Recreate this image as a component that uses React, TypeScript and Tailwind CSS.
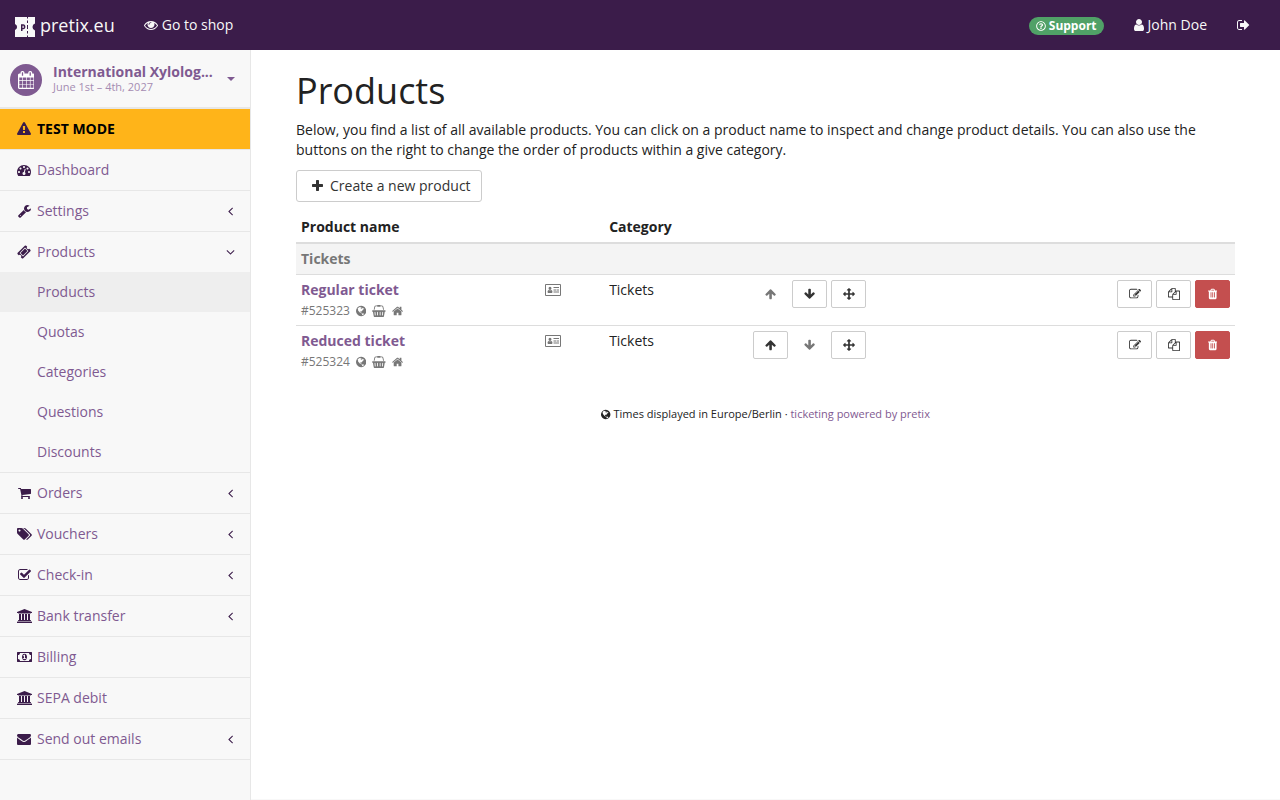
import React, { type ReactNode } from "react";
import { FaRegQuestionCircle } from "react-icons/fa";

type IconDef = { x?: number; w: number; d: string };

const icons = {
  eye: { w: 1792, d: "M1664 960q-152-236-381-353 61 104 61 225 0 185-131.5 316.5t-316.5 131.5-316.5-131.5-131.5-316.5q0-121 61-225-229 117-381 353 133 205 333.5 326.5t434.5 121.5 434.5-121.5 333.5-326.5zm-720-384q0-20-14-34t-34-14q-125 0-214.5 89.5t-89.5 214.5q0 20 14 34t34 14 34-14 14-34q0-86 61-147t147-61q20 0 34-14t14-34zm848 384q0 34-20 69-140 230-376.5 368.5t-499.5 138.5-499.5-139-376.5-368q-20-35-20-69t20-69q140-229 376.5-368t499.5-139 499.5 139 376.5 368q20 35 20 69z" },
  calendar: { x: 64, w: 1664, d: "M192 1664h288v-288h-288v288zm352 0h320v-288h-320v288zm-352-352h288v-320h-288v320zm352 0h320v-320h-320v320zm-352-384h288v-288h-288v288zm736 736h320v-288h-320v288zm-384-736h320v-288h-320v288zm768 736h288v-288h-288v288zm-384-352h320v-320h-320v320zm-352-864v-288q0-13-9.5-22.5t-22.5-9.5h-64q-13 0-22.5 9.5t-9.5 22.5v288q0 13 9.5 22.5t22.5 9.5h64q13 0 22.5-9.5t9.5-22.5zm736 864h288v-320h-288v320zm-384-384h320v-288h-320v288zm384 0h288v-288h-288v288zm32-480v-288q0-13-9.5-22.5t-22.5-9.5h-64q-13 0-22.5 9.5t-9.5 22.5v288q0 13 9.5 22.5t22.5 9.5h64q13 0 22.5-9.5t9.5-22.5zm384-64v1280q0 52-38 90t-90 38h-1408q-52 0-90-38t-38-90v-1280q0-52 38-90t90-38h128v-96q0-66 47-113t113-47h64q66 0 113 47t47 113v96h384v-96q0-66 47-113t113-47h64q66 0 113 47t47 113v96h128q52 0 90 38t38 90z" },
  warning: { w: 1792, d: "M1024 1375v-190q0-14-9.5-23.5t-22.5-9.5h-192q-13 0-22.5 9.5t-9.5 23.5v190q0 14 9.5 23.5t22.5 9.5h192q13 0 22.5-9.5t9.5-23.5zm-2-374l18-459q0-12-10-19-13-11-24-11h-220q-11 0-24 11-10 7-10 21l17 457q0 10 10 16.5t24 6.5h185q14 0 23.5-6.5t10.5-16.5zm-14-934l768 1408q35 63-2 126-17 29-46.5 46t-63.5 17h-1536q-34 0-63.5-17t-46.5-46q-37-63-2-126l768-1408q17-31 47-49t65-18 65 18 47 49z" },
  gauge: { w: 1792, d: "M384 1152q0-53-37.5-90.5t-90.5-37.5-90.5 37.5-37.5 90.5 37.5 90.5 90.5 37.5 90.5-37.5 37.5-90.5zm192-448q0-53-37.5-90.5t-90.5-37.5-90.5 37.5-37.5 90.5 37.5 90.5 90.5 37.5 90.5-37.5 37.5-90.5zm428 481l101-382q6-26-7.5-48.5t-38.5-29.5-48 6.5-30 39.5l-101 382q-60 5-107 43.5t-63 98.5q-20 77 20 146t117 89 146-20 89-117q16-60-6-117t-72-91zm660-33q0-53-37.5-90.5t-90.5-37.5-90.5 37.5-37.5 90.5 37.5 90.5 90.5 37.5 90.5-37.5 37.5-90.5zm-640-640q0-53-37.5-90.5t-90.5-37.5-90.5 37.5-37.5 90.5 37.5 90.5 90.5 37.5 90.5-37.5 37.5-90.5zm448 192q0-53-37.5-90.5t-90.5-37.5-90.5 37.5-37.5 90.5 37.5 90.5 90.5 37.5 90.5-37.5 37.5-90.5zm320 448q0 261-141 483-19 29-54 29h-1402q-35 0-54-29-141-221-141-483 0-182 71-348t191-286 286-191 348-71 348 71 286 191 191 286 71 348z" },
  wrench: { x: 64, w: 1664, d: "M448 1472q0-26-19-45t-45-19-45 19-19 45 19 45 45 19 45-19 19-45zm644-420l-682 682q-37 37-90 37-52 0-91-37l-106-108q-38-36-38-90 0-53 38-91l681-681q39 98 114.5 173.5t173.5 114.5zm634-435q0 39-23 106-47 134-164.5 217.5t-258.5 83.5q-185 0-316.5-131.5t-131.5-316.5 131.5-316.5 316.5-131.5q58 0 121.5 16.5t107.5 46.5q16 11 16 28t-16 28l-293 169v224l193 107q5-3 79-48.5t135.5-81 70.5-35.5q15 0 23.5 10t8.5 25z" },
  ticket: { w: 1792, d: "M1024 452l316 316-572 572-316-316zm-211 979l618-618q19-19 19-45t-19-45l-362-362q-18-18-45-18t-45 18l-618 618q-19 19-19 45t19 45l362 362q18 18 45 18t45-18zm889-637l-907 908q-37 37-90.5 37t-90.5-37l-126-126q56-56 56-136t-56-136-136-56-136 56l-125-126q-37-37-37-90.5t37-90.5l907-906q37-37 90.5-37t90.5 37l125 125q-56 56-56 136t56 136 136 56 136-56l126 125q37 37 37 90.5t-37 90.5z" },
  cart: { x: 64, w: 1664, d: "M704 1536q0 52-38 90t-90 38-90-38-38-90 38-90 90-38 90 38 38 90zm896 0q0 52-38 90t-90 38-90-38-38-90 38-90 90-38 90 38 38 90zm128-1088v512q0 24-16.5 42.5t-40.5 21.5l-1044 122q13 60 13 70 0 16-24 64h920q26 0 45 19t19 45-19 45-45 19h-1024q-26 0-45-19t-19-45q0-11 8-31.5t16-36 21.5-40 15.5-29.5l-177-823h-204q-26 0-45-19t-19-45 19-45 45-19h256q16 0 28.5 6.5t19.5 15.5 13 24.5 8 26 5.5 29.5 4.5 26h1201q26 0 45 19t19 45z" },
  tags: { w: 1920, d: "M448 448q0-53-37.5-90.5t-90.5-37.5-90.5 37.5-37.5 90.5 37.5 90.5 90.5 37.5 90.5-37.5 37.5-90.5zm1067 576q0 53-37 90l-491 492q-39 37-91 37-53 0-90-37l-715-716q-38-37-64.5-101t-26.5-117v-416q0-52 38-90t90-38h416q53 0 117 26.5t102 64.5l715 714q37 39 37 91zm384 0q0 53-37 90l-491 492q-39 37-91 37-36 0-59-14t-53-45l470-470q37-37 37-90 0-52-37-91l-715-714q-38-38-102-64.5t-117-26.5h224q53 0 117 26.5t102 64.5l715 714q37 39 37 91z" },
  check: { x: 64, w: 1664, d: "M1472 930v318q0 119-84.5 203.5t-203.5 84.5h-832q-119 0-203.5-84.5t-84.5-203.5v-832q0-119 84.5-203.5t203.5-84.5h832q63 0 117 25 15 7 18 23 3 17-9 29l-49 49q-10 10-23 10-3 0-9-2-23-6-45-6h-832q-66 0-113 47t-47 113v832q0 66 47 113t113 47h832q66 0 113-47t47-113v-254q0-13 9-22l64-64q10-10 23-10 6 0 12 3 20 8 20 29zm231-489l-814 814q-24 24-57 24t-57-24l-430-430q-24-24-24-57t24-57l110-110q24-24 57-24t57 24l263 263 647-647q24-24 57-24t57 24l110 110q24 24 24 57t-24 57z" },
  bank: { w: 1920, d: "M960 0l960 384v128h-128q0 26-20.5 45t-48.5 19h-1526q-28 0-48.5-19t-20.5-45h-128v-128zm-704 640h256v768h128v-768h256v768h128v-768h256v768h128v-768h256v768h59q28 0 48.5 19t20.5 45v64h-1664v-64q0-26 20.5-45t48.5-19h59v-768zm1595 960q28 0 48.5 19t20.5 45v128h-1920v-128q0-26 20.5-45t48.5-19h1782z" },
  money: { w: 1920, d: "M768 1152h384v-96h-128v-448h-114l-148 137 77 80q42-37 55-57h2v288h-128v96zm512-256q0 70-21 142t-59.5 134-101.5 101-138 39-138-39-101.5-101-59.5-134-21-142 21-142 59.5-134 101.5-101 138-39 138 39 101.5 101 59.5 134 21 142zm512 256v-512q-106 0-181-75t-75-181h-1152q0 106-75 181t-181 75v512q106 0 181 75t75 181h1152q0-106 75-181t181-75zm128-832v1152q0 26-19 45t-45 19h-1792q-26 0-45-19t-19-45v-1152q0-26 19-45t45-19h1792q26 0 45 19t19 45z" },
  envelope: { w: 1792, d: "M1792 710v794q0 66-47 113t-113 47h-1472q-66 0-113-47t-47-113v-794q44 49 101 87 362 246 497 345 57 42 92.5 65.5t94.5 48 110 24.5h2q51 0 110-24.5t94.5-48 92.5-65.5q170-123 498-345 57-39 100-87zm0-294q0 79-49 151t-122 123q-376 261-468 325-10 7-42.5 31t-54 38.5-52 32.5-57.5 27-50 9h-2q-23 0-50-9t-57.5-27-52-32.5-54-38.5-42.5-31q-91-64-262-182.5t-205-142.5q-62-42-117-115.5t-55-136.5q0-78 41.5-130t118.5-52h1472q65 0 112.5 47t47.5 113z" },
  angleLeft: { x: 576, w: 640, d: "M1203 544q0 13-10 23l-393 393 393 393q10 10 10 23t-10 23l-50 50q-10 10-23 10t-23-10l-466-466q-10-10-10-23t10-23l466-466q10-10 23-10t23 10l50 50q10 10 10 23z" },
  angleDown: { x: 320, w: 1152, d: "M1395 736q0 13-10 23l-466 466q-10 10-23 10t-23-10l-466-466q-10-10-10-23t10-23l50-50q10-10 23-10t23 10l393 393 393-393q10-10 23-10t23 10l50 50q10 10 10 23z" },
  plus: { x: 192, w: 1408, d: "M1600 736v192q0 40-28 68t-68 28h-416v416q0 40-28 68t-68 28h-192q-40 0-68-28t-28-68v-416h-416q-40 0-68-28t-28-68v-192q0-40 28-68t68-28h416v-416q0-40 28-68t68-28h192q40 0 68 28t28 68v416h416q40 0 68 28t28 68z" },
  arrowUp: { x: 64, w: 1664, d: "M1675 971q0 51-37 90l-75 75q-38 38-91 38-54 0-90-38l-294-293v704q0 52-37.5 84.5t-90.5 32.5h-128q-53 0-90.5-32.5t-37.5-84.5v-704l-294 293q-36 38-90 38t-90-38l-75-75q-38-38-38-90 0-53 38-91l651-651q35-37 90-37 54 0 91 37l651 651q37 39 37 91z" },
  arrowDown: { x: 64, w: 1664, d: "M1675 832q0 53-37 90l-651 652q-39 37-91 37-53 0-90-37l-651-652q-38-36-38-90 0-53 38-91l74-75q39-37 91-37 53 0 90 37l294 294v-704q0-52 38-90t90-38h128q52 0 90 38t38 90v704l294-294q37-37 90-37 52 0 91 37l75 75q37 39 37 91z" },
  arrows: { w: 1792, d: "M1792 896q0 26-19 45l-256 256q-19 19-45 19t-45-19-19-45v-128h-384v384h128q26 0 45 19t19 45-19 45l-256 256q-19 19-45 19t-45-19l-256-256q-19-19-19-45t19-45 45-19h128v-384h-384v128q0 26-19 45t-45 19-45-19l-256-256q-19-19-19-45t19-45l256-256q19-19 45-19t45 19 19 45v128h384v-384h-128q-26 0-45-19t-19-45 19-45l256-256q19-19 45-19t45 19l256 256q19 19 19 45t-19 45-45 19h-128v384h384v-128q0-26 19-45t45-19 45 19l256 256q19 19 19 45z" },
  edit: { w: 1792, d: "M888 1184l116-116-152-152-116 116v56h96v96h56zm440-720q-16-16-33 1l-350 350q-17 17-1 33t33-1l350-350q17-17 1-33zm80 594v190q0 119-84.5 203.5t-203.5 84.5h-832q-119 0-203.5-84.5t-84.5-203.5v-832q0-119 84.5-203.5t203.5-84.5h832q63 0 117 25 15 7 18 23 3 17-9 29l-49 49q-14 14-32 8-23-6-45-6h-832q-66 0-113 47t-47 113v832q0 66 47 113t113 47h832q66 0 113-47t47-113v-126q0-13 9-22l64-64q15-15 35-7t20 29zm-96-738l288 288-672 672h-288v-288zm444 132l-92 92-288-288 92-92q28-28 68-28t68 28l152 152q28 28 28 68t-28 68z" },
  copy: { w: 1792, d: "M1696 384q40 0 68 28t28 68v1216q0 40-28 68t-68 28h-960q-40 0-68-28t-28-68v-288h-544q-40 0-68-28t-28-68v-672q0-40 20-88t48-76l408-408q28-28 76-48t88-20h416q40 0 68 28t28 68v328q68-40 128-40h416zm-544 213l-299 299h299v-299zm-640-384l-299 299h299v-299zm196 647l316-316v-416h-384v416q0 40-28 68t-68 28h-416v640h512v-256q0-40 20-88t48-76zm956 804v-1152h-384v416q0 40-28 68t-68 28h-416v640h896z" },
  trash: { x: 192, w: 1408, d: "M704 1376v-704q0-14-9-23t-23-9h-64q-14 0-23 9t-9 23v704q0 14 9 23t23 9h64q14 0 23-9t9-23zm256 0v-704q0-14-9-23t-23-9h-64q-14 0-23 9t-9 23v704q0 14 9 23t23 9h64q14 0 23-9t9-23zm256 0v-704q0-14-9-23t-23-9h-64q-14 0-23 9t-9 23v704q0 14 9 23t23 9h64q14 0 23-9t9-23zm-544-992h448l-48-117q-7-9-17-11h-317q-10 2-17 11zm928 32v64q0 14-9 23t-23 9h-96v948q0 83-47 143.5t-113 60.5h-832q-66 0-113-58.5t-47-141.5v-952h-96q-14 0-23-9t-9-23v-64q0-14 9-23t23-9h309l70-167q15-37 54-63t79-26h320q40 0 79 26t54 63l70 167h309q14 0 23 9t9 23z" },
  user: { x: 256, w: 1280, d: "M1536 1399q0 109-62.5 187t-150.5 78h-854q-88 0-150.5-78t-62.5-187q0-85 8.5-160.5t31.5-152 58.5-131 94-89 134.5-34.5q131 128 313 128t313-128q76 0 134.5 34.5t94 89 58.5 131 31.5 152 8.5 160.5zm-256-887q0 159-112.5 271.5t-271.5 112.5-271.5-112.5-112.5-271.5 112.5-271.5 271.5-112.5 271.5 112.5 112.5 271.5z" },
  signOut: { x: 64, w: 1664, d: "M704 1440q0 4 1 20t.5 26.5-3 23.5-10 19.5-20.5 6.5h-320q-119 0-203.5-84.5t-84.5-203.5v-704q0-119 84.5-203.5t203.5-84.5h320q13 0 22.5 9.5t9.5 22.5q0 4 1 20t.5 26.5-3 23.5-10 19.5-20.5 6.5h-320q-66 0-113 47t-47 113v704q0 66 47 113t113 47h312l11.5 1 11.5 3 8 5.5 7 9 2 13.5zm928-544q0 26-19 45l-544 544q-19 19-45 19t-45-19-19-45v-288h-448q-26 0-45-19t-19-45v-384q0-26 19-45t45-19h448v-288q0-26 19-45t45-19 45 19l544 544q19 19 19 45z" },
  basket: { w: 2048, d: "M1920 768q53 0 90.5 37.5t37.5 90.5-37.5 90.5-90.5 37.5h-15l-115 662q-8 46-44 76t-82 30h-1280q-46 0-82-30t-44-76l-115-662h-15q-53 0-90.5-37.5t-37.5-90.5 37.5-90.5 90.5-37.5h1792zm-1435 800q26-2 43.5-22.5t15.5-46.5l-32-416q-2-26-22.5-43.5t-46.5-15.5-43.5 22.5-15.5 46.5l32 416q2 25 20.5 42t43.5 17h5zm411-64v-416q0-26-19-45t-45-19-45 19-19 45v416q0 26 19 45t45 19 45-19 19-45zm384 0v-416q0-26-19-45t-45-19-45 19-19 45v416q0 26 19 45t45 19 45-19 19-45zm352 5l32-416q2-26-15.5-46.5t-43.5-22.5-46.5 15.5-22.5 43.5l-32 416q-2 26 15.5 46.5t43.5 22.5h5q25 0 43.5-17t20.5-42zm-1156-1217l-93 412h-132l101-441q19-88 89-143.5t160-55.5h167q0-26 19-45t45-19h384q26 0 45 19t19 45h167q90 0 160 55.5t89 143.5l101 441h-132l-93-412q-11-44-45.5-72t-79.5-28h-167q0 26-19 45t-45 19h-384q-26 0-45-19t-19-45h-167q-45 0-79.5 28t-45.5 72z" },
  home: { x: 64, w: 1664, d: "M1472 992v480q0 26-19 45t-45 19h-384v-384h-256v384h-384q-26 0-45-19t-19-45v-480q0-1 .5-3t.5-3l575-474 575 474q1 2 1 6zm223-69l-62 74q-8 9-21 11h-3q-13 0-21-7l-692-577-692 577q-12 8-24 7-13-2-21-11l-62-74q-8-10-7-23.5t11-21.5l719-599q32-26 76-26t76 26l244 204v-195q0-14 9-23t23-9h192q14 0 23 9t9 23v408l219 182q10 8 11 21.5t-7 23.5z" },
  globe: { x: 128, w: 1536, d: "M896 128q209 0 385.5 103t279.5 279.5 103 385.5-103 385.5-279.5 279.5-385.5 103-385.5-103-279.5-279.5-103-385.5 103-385.5 279.5-279.5 385.5-103zm274 521q-2 1-9.5 9.5t-13.5 9.5q2 0 4.5-5t5-11 3.5-7q6-7 22-15 14-6 52-12 34-8 51 11-2-2 9.5-13t14.5-12q3-2 15-4.5t15-7.5l2-22q-12 1-17.5-7t-6.5-21q0 2-6 8 0-7-4.5-8t-11.5 1-9 1q-10-3-15-7.5t-8-16.5-4-15q-2-5-9.5-11t-9.5-10q-1-2-2.5-5.5t-3-6.5-4-5.5-5.5-2.5-7 5-7.5 10-4.5 5q-3-2-6-1.5t-4.5 1-4.5 3-5 3.5q-3 2-8.5 3t-8.5 2q15-5-1-11-10-4-16-3 9-4 7.5-12t-8.5-14h5q-1-4-8.5-8.5t-17.5-8.5-13-6q-8-5-34-9.5t-33-.5q-5 6-4.5 10.5t4 14 3.5 12.5q1 6-5.5 13t-6.5 12q0 7 14 15.5t10 21.5q-3 8-16 16t-16 12q-5 8-1.5 18.5t10.5 16.5q2 2 1.5 4t-3.5 4.5-5.5 4-6.5 3.5l-3 2q-11 5-20.5-6t-13.5-26q-7-25-16-30-23-8-29 1-5-13-41-26-25-9-58-4 6-1 0-15-7-15-19-12 3-6 4-17.5t1-13.5q3-13 12-23 1-1 7-8.5t9.5-13.5.5-6q35 4 50-11 5-5 11.5-17t10.5-17q9-6 14-5.5t14.5 5.5 14.5 5q14 1 15.5-11t-7.5-20q12 1 3-17-4-7-8-9-12-4-27 5-8 4 2 8-1-1-9.5 10.5t-16.5 17.5-16-5q-1-1-5.5-13.5t-9.5-13.5q-8 0-16 15 3-8-11-15t-24-8q19-12-8-27-7-4-20.5-5t-19.5 4q-5 7-5.5 11.5t5 8 10.5 5.5 11.5 4 8.5 3q14 10 8 14-2 1-8.5 3.5t-11.5 4.5-6 4q-3 4 0 14t-2 14q-5-5-9-17.5t-7-16.5q7 9-25 6l-10-1q-4 0-16 2t-20.5 1-13.5-8q-4-8 0-20 1-4 4-2-4-3-11-9.5t-10-8.5q-46 15-94 41 6 1 12-1 5-2 13-6.5t10-5.5q34-14 42-7l5-5q14 16 20 25-7-4-30-1-20 6-22 12 7 12 5 18-4-3-11.5-10t-14.5-11-15-5q-16 0-22 1-146 80-235 222 7 7 12 8 4 1 5 9t2.5 11 11.5-3q9 8 3 19 1-1 44 27 19 17 21 21 3 11-10 18-1-2-9-9t-9-4q-3 5 .5 18.5t10.5 12.5q-7 0-9.5 16t-2.5 35.5-1 23.5l2 1q-3 12 5.5 34.5t21.5 19.5q-13 3 20 43 6 8 8 9 3 2 12 7.5t15 10 10 10.5q4 5 10 22.5t14 23.5q-2 6 9.5 20t10.5 23q-1 0-2.5 1t-2.5 1q3 7 15.5 14t15.5 13q1 3 2 10t3 11 8 2q2-20-24-62-15-25-17-29-3-5-5.5-15.5t-4.5-14.5q2 0 6 1.5t8.5 3.5 7.5 4 2 3q-3 7 2 17.5t12 18.5 17 19 12 13q6 6 14 19.5t0 13.5q9 0 20 10.5t17 19.5q5 8 8 26t5 24q2 7 8.5 13.5t12.5 9.5l16 8 13 7q5 2 18.5 10.5t21.5 11.5q10 4 16 4t14.5-2.5 13.5-3.5q15-2 29 15t21 21q36 19 55 11-2 1 .5 7.5t8 15.5 9 14.5 5.5 8.5q5 6 18 15t18 15q6-4 7-9-3 8 7 20t18 10q14-3 14-32-31 15-49-18 0-1-2.5-5.5t-4-8.5-2.5-8.5 0-7.5 5-3q9 0 10-3.5t-2-12.5-4-13q-1-8-11-20t-12-15q-5 9-16 8t-16-9q0 1-1.5 5.5t-1.5 6.5q-13 0-15-1 1-3 2.5-17.5t3.5-22.5q1-4 5.5-12t7.5-14.5 4-12.5-4.5-9.5-17.5-2.5q-19 1-26 20-1 3-3 10.5t-5 11.5-9 7q-7 3-24 2t-24-5q-13-8-22.5-29t-9.5-37q0-10 2.5-26.5t3-25-5.5-24.5q3-2 9-9.5t10-10.5q2-1 4.5-1.5t4.5 0 4-1.5 3-6q-1-1-4-3-3-3-4-3 7 3 28.5-1.5t27.5 1.5q15 11 22-2 0-1-2.5-9.5t-.5-13.5q5 27 29 9 3 3 15.5 5t17.5 5q3 2 7 5.5t5.5 4.5 5-.5 8.5-6.5q10 14 12 24 11 40 19 44 7 3 11 2t4.5-9.5 0-14-1.5-12.5l-1-8v-18l-1-8q-15-3-18.5-12t1.5-18.5 15-18.5q1-1 8-3.5t15.5-6.5 12.5-8q21-19 15-35 7 0 11-9-1 0-5-3t-7.5-5-4.5-2q9-5 2-16 5-3 7.5-11t7.5-10q9 12 21 2 8-8 1-16 5-7 20.5-10.5t18.5-9.5q7 2 8-2t1-12 3-12q4-5 15-9t13-5l17-11q3-4 0-4 18 2 31-11 10-11-6-20 3-6-3-9.5t-15-5.5q3-1 11.5-.5t10.5-1.5q15-10-7-16-17-5-43 12zm-163 877q206-36 351-189-3-3-12.5-4.5t-12.5-3.5q-18-7-24-8 1-7-2.5-13t-8-9-12.5-8-11-7q-2-2-7-6t-7-5.5-7.5-4.5-8.5-2-10 1l-3 1q-3 1-5.5 2.5t-5.5 3-4 3 0 2.5q-21-17-36-22-5-1-11-5.5t-10.5-7-10-1.5-11.5 7q-5 5-6 15t-2 13q-7-5 0-17.5t2-18.5q-3-6-10.5-4.5t-12 4.5-11.5 8.5-9 6.5-8.5 5.5-8.5 7.5q-3 4-6 12t-5 11q-2-4-11.5-6.5t-9.5-5.5q2 10 4 35t5 38q7 31-12 48-27 25-29 40-4 22 12 26 0 7-8 20.5t-7 21.5q0 6 2 16z" },
  idCard: { w: 2048, d: "M128 128h1792q128 0 128 128v1280q0 128-128 128h-1792q-128 0-128-128v-1280q0-128 128-128zM128 256v1280h1792v-1280zM640 480a190 200 0 1 1 0 400a190 200 0 1 1 0-400zM460 880q70 60 180 60t180-60q140 40 140 270 0 90-90 130h-460q-90-40-90-130 0-230 140-270zM1088 512h704v128h-704zM1088 832h320v128h-320zM1472 832h320v128h-320zM1088 1088h704v128h-704z" },
} satisfies Record<string, IconDef>;

type IconName = keyof typeof icons;

function Icon({ name, className = "h-3.5" }: { name: IconName; className?: string }) {
  const icon: IconDef = icons[name];
  return (
    <svg
      viewBox={`${icon.x ?? 0} 0 ${icon.w} 1792`}
      className={`inline-block w-auto shrink-0 fill-current ${className}`}
      fillRule={name === "idCard" ? "evenodd" : "nonzero"}
      aria-hidden="true"
    >
      <path d={icon.d} />
    </svg>
  );
}

function Logo() {
  return (
    <svg viewBox="0 0 20 20" className="mt-1 size-5 fill-[#f8f8f8]" aria-hidden="true">
      <path
        fillRule="evenodd"
        d="M0 0H12V1.500H13V0H20V6.500A3.700 3.700 0 0 0 20 13.500V20H13V18.500H12V20H0V13A3.200 3.200 0 0 0 0 7ZM12 3.500V6H13V3.500ZM12 8V12H13V8ZM12 14V16.500H13V14ZM6 7.300V14H7.500V12.300H8.200C9.700 12.300 10.400 11.300 10.400 9.800C10.400 8.200 9.700 7.300 8.200 7.300ZM7.500 8.700H8.700V11H7.500Z"
      />
    </svg>
  );
}

const subItems = ["Products", "Quotas", "Categories", "Questions", "Discounts"];

type NavEntry = { icon: IconName; label: string; arrow?: "angleLeft" | "angleDown"; children?: string[] };

const navItems: NavEntry[] = [
  { icon: "gauge", label: "Dashboard" },
  { icon: "wrench", label: "Settings", arrow: "angleLeft" },
  { icon: "ticket", label: "Products", arrow: "angleDown", children: subItems },
  { icon: "cart", label: "Orders", arrow: "angleLeft" },
  { icon: "tags", label: "Vouchers", arrow: "angleLeft" },
  { icon: "check", label: "Check-in", arrow: "angleLeft" },
  { icon: "bank", label: "Bank transfer", arrow: "angleLeft" },
  { icon: "money", label: "Billing" },
  { icon: "bank", label: "SEPA debit" },
  { icon: "envelope", label: "Send out emails", arrow: "angleLeft" },
];

function Sidebar() {
  return (
    <aside className="w-[251px] shrink-0 border-r border-[#e7e7e7] bg-[#f8f8f8] text-[#7f5a91]">
      <button type="button" className="flex h-[59px] w-full items-center border-b-2 border-[#e7e7e7] pr-[15px] pl-2.5 text-left">
        <span className="mt-0.5 flex size-8 shrink-0 items-center justify-center rounded-full bg-[#7f5a91] text-white">
          <Icon name="calendar" className="h-[18px]" />
        </span>
        <span className="ml-[11px] flex-1 whitespace-nowrap">
          <span className="block leading-4 font-bold">International Xylolog...</span>
          <span className="block text-[11px] leading-[14px] text-[#a58cb2]">June 1st – 4th, 2027</span>
        </span>
        <svg viewBox="0 0 8 4" className="h-1 w-2 fill-current" aria-hidden="true">
          <path d="M0 0H8L4 4Z" />
        </svg>
      </button>
      <nav aria-label="Main">
        <a href="#test-mode" className="flex h-10 items-center bg-[#ffb419] px-[15px] font-bold text-black">
          <span className="mr-1 flex w-[18px] justify-center text-[#3b1c4a]">
            <Icon name="warning" />
          </span>
          TEST MODE
        </a>
        <ul className="border-t border-[#e7e7e7]">
          {navItems.map((item) => (
            <li key={item.label} className="border-b border-[#e7e7e7]">
              <a href="#nav" className="flex h-10 items-center px-[15px]">
                <span className="mr-1 flex w-[18px] justify-center text-[#3b1c4a]">
                  <Icon name={item.icon} />
                </span>
                <span className="flex-1">{item.label}</span>
                {item.arrow && (
                  <span className="flex w-2.5 justify-center text-[#3b1c4a]">
                    <Icon name={item.arrow} />
                  </span>
                )}
              </a>
              {item.children && (
                <ul>
                  {item.children.map((child, i) => (
                    <li key={child}>
                      <a href="#sub" className={`flex h-10 items-center pl-[37px] ${i === 0 ? "bg-[#eeeeee]" : ""}`}>
                        {child}
                      </a>
                    </li>
                  ))}
                </ul>
              )}
            </li>
          ))}
        </ul>
      </nav>
    </aside>
  );
}

function ToolButton({ label, tone = "default", children }: { label: string; tone?: "default" | "danger" | "off"; children: ReactNode }) {
  const tones = {
    default: "border-[#cccccc] bg-white text-[#333333]",
    danger: "border-[#c44f4f] bg-[#c44f4f] text-white",
    off: "border-transparent text-[#777777]",
  };
  return (
    <button
      type="button"
      aria-label={label}
      disabled={tone === "off"}
      className={`flex h-7 w-[35px] items-center justify-center rounded-xs border ${tones[tone]}`}
    >
      {children}
    </button>
  );
}

const products = [
  { name: "Regular ticket", id: "#525323", up: false, down: true },
  { name: "Reduced ticket", id: "#525324", up: true, down: false },
];

export default function App() {
  return (
    <div className="flex min-h-screen flex-col bg-[#f8f8f8] font-['Open_Sans',sans-serif] text-sm leading-5 text-[#222222]">
      <header className="flex h-[50px] items-center bg-[#3b1c4a] text-[#f8f8f8]">
        <a href="#home" className="flex items-center gap-[5px] pl-[15px] text-lg">
          <Logo />
          pretix.eu
        </a>
        <a href="#shop" className="ml-[29px] flex items-center gap-1">
          <Icon name="eye" />
          Go to shop
        </a>
        <div className="ml-auto flex items-center">
          <a href="#support" className="mt-0.5 flex h-[18px] items-center gap-[3px] rounded-full bg-[#50a167] px-[7px] text-xs font-bold text-white">
            <FaRegQuestionCircle className="size-2.5" aria-hidden="true" />
            Support
          </a>
          <a href="#account" className="ml-[30px] flex items-center gap-1">
            <Icon name="user" />
            John Doe
          </a>
          <a href="#logout" aria-label="Log out" className="mr-[30px] ml-[30px] flex">
            <Icon name="signOut" />
          </a>
        </div>
      </header>
      <div className="flex flex-1">
        <Sidebar />
        <div className="mb-px min-w-0 flex-1 bg-white px-[45px]">
          <main>
            <h1 className="pt-[21px] text-4xl leading-10">Products</h1>
            <p className="mt-[9px]">
              Below, you find a list of all available products. You can click on a product name to inspect and change product details. You can also use the buttons on the right to change the order of products within a give category.
            </p>
            <button type="button" className="mt-2.5 flex h-8 items-center gap-[7px] rounded-[3px] border border-[#cccccc] bg-white pr-2.5 pl-[15px] text-[#333333]">
              <Icon name="plus" />
              Create a new product
            </button>
            <table className="mt-2.5 w-full table-fixed text-left">
              <colgroup>
                <col className="w-[26%]" />
                <col className="w-16" />
                <col className="w-36" />
                <col />
                <col className="w-[15%]" />
              </colgroup>
              <thead>
                <tr className="border-b-2 border-[#dddddd]">
                  <th className="p-[5px] font-bold">Product name</th>
                  <td />
                  <th className="p-[5px] font-bold">Category</th>
                  <td />
                  <td />
                </tr>
              </thead>
              <tbody>
                <tr className="border-b border-[#dddddd] bg-[#f4f4f4]">
                  <th colSpan={5} className="p-[5px] font-bold text-[#777777]">Tickets</th>
                </tr>
                {products.map((p) => (
                  <tr key={p.id} className="border-b border-[#dddddd] align-top last:border-b-0">
                    <td className="p-[5px]">
                      <a href="#product" className="block font-bold text-[#7f5a91]">{p.name}</a>
                      <span className="flex items-center gap-1.5 pt-px text-xs leading-[19px] text-[#777777]">
                        {p.id}
                        <Icon name="globe" className="h-3" />
                        <Icon name="basket" className="h-3" />
                        <Icon name="home" className="h-3" />
                      </span>
                    </td>
                    <td className="p-[5px] text-[#777777]">
                      <span className="flex h-5 items-center">
                        <Icon name="idCard" />
                      </span>
                    </td>
                    <td className="p-[5px]">Tickets</td>
                    <td className="p-[5px]">
                      <span className="flex gap-1">
                        <ToolButton label="Move up" tone={p.up ? "default" : "off"}><Icon name="arrowUp" className="h-3" /></ToolButton>
                        <ToolButton label="Move down" tone={p.down ? "default" : "off"}><Icon name="arrowDown" className="h-3" /></ToolButton>
                        <ToolButton label="Drag"><Icon name="arrows" className="h-3" /></ToolButton>
                      </span>
                    </td>
                    <td className="p-[5px]">
                      <span className="flex justify-end gap-1">
                        <ToolButton label="Edit"><Icon name="edit" className="h-3" /></ToolButton>
                        <ToolButton label="Copy"><Icon name="copy" className="h-3" /></ToolButton>
                        <ToolButton label="Delete" tone="danger"><Icon name="trash" className="h-3" /></ToolButton>
                      </span>
                    </td>
                  </tr>
                ))}
              </tbody>
            </table>
          </main>
          <footer className="flex items-center justify-center pt-7 text-[11px]">
            <Icon name="globe" className="mr-[3px] h-[11px]" />
            <span>
              Times displayed in Europe/Berlin · <a href="#pretix" className="text-[#7f5a91]">ticketing powered by pretix</a>
            </span>
          </footer>
        </div>
      </div>
    </div>
  );
}
